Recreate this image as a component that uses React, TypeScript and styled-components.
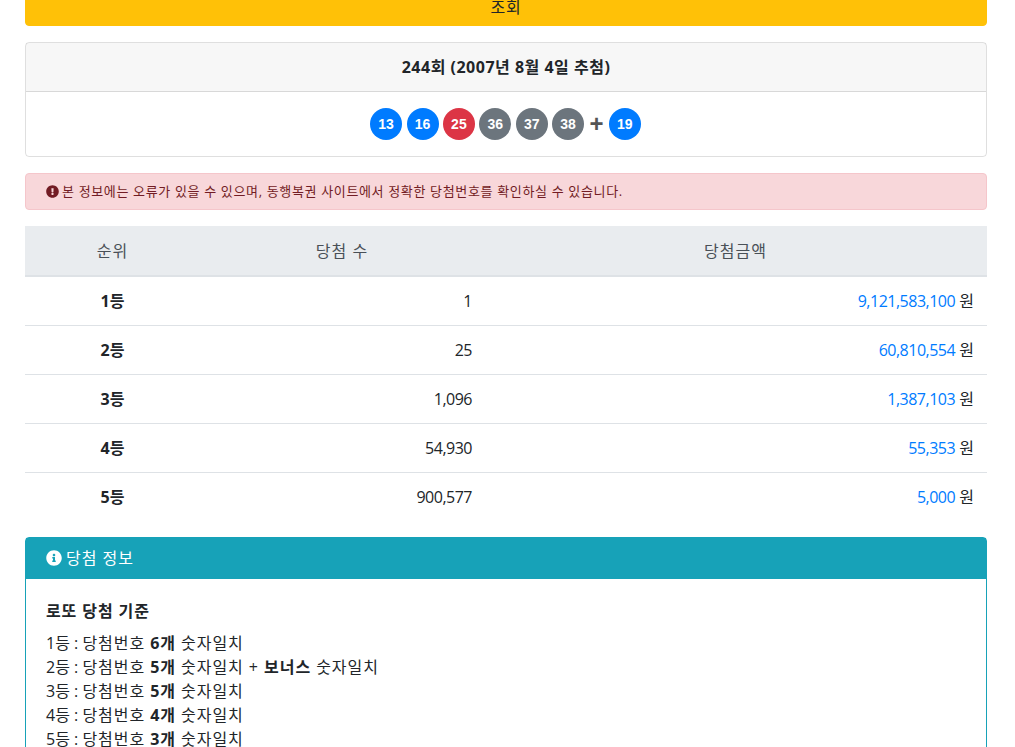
import React from "react";
import styled, { createGlobalStyle } from "styled-components";
import { FaExclamationCircle, FaInfoCircle } from "react-icons/fa";

const Global = createGlobalStyle`
  * { box-sizing: border-box; }
  html, body { margin: 0; padding: 0; background: #fff; height: 747px; overflow: hidden; }
  body {
    font-family: "Open Sans", "Noto Sans CJK KR", sans-serif;
    font-size: 16px;
    line-height: 24px;
    color: #212529;
  }
`;

const Page = styled.main`
  display: flex;
  flex-direction: column;
  gap: 16px;
  width: 962px;
  margin: -12px 0 0 25px;
`;

const SearchButton = styled.button`
  display: block;
  width: 100%;
  height: 38px;
  background: #ffc107;
  border: 1px solid #ffc107;
  border-radius: 4px;
  color: #212529;
  font: inherit;
  letter-spacing: 0.8px;
  padding: 6px 12px;
`;

const DrawCard = styled.section`
  border: 1px solid rgba(0, 0, 0, 0.125);
  border-radius: 4px;
  height: 115px;
`;

const DrawHeader = styled.h2`
  margin: 0;
  height: 49px;
  padding: 12px 20px;
  background: rgba(0, 0, 0, 0.03);
  border-bottom: 1px solid rgba(0, 0, 0, 0.125);
  font-size: 16px;
  font-weight: 700;
  line-height: 24px;
  letter-spacing: 0.5px;
  text-align: center;
`;

const BallRow = styled.div`
  display: flex;
  justify-content: center;
  align-items: center;
  gap: 4.4px;
  padding: 16px 1px 0 0;
`;

const Ball = styled.span<{ $tone: string }>`
  display: flex;
  align-items: center;
  justify-content: center;
  width: 32px;
  height: 32px;
  border-radius: 50%;
  background: ${(p) => p.$tone};
  color: #fff;
  font-family: "Liberation Sans", Arial, sans-serif;
  font-size: 14px;
  font-weight: 700;
`;

const Plus = styled.span`
  width: 16px;
  text-align: center;
  color: #555;
  font-family: "Liberation Sans", Arial, sans-serif;
  font-size: 24px;
  font-weight: 700;
`;

const Alert = styled.div`
  display: flex;
  align-items: center;
  gap: 3px;
  height: 37px;
  padding: 0 20px 1px;
  background: #f8d7da;
  border: 1px solid #f5c6cb;
  border-radius: 4px;
  color: #721c24;
  font-size: 13px;
  letter-spacing: 0.65px;
  svg { width: 13px; height: 13px; flex: none; }
`;

const Table = styled.table`
  width: 962px;
  border-collapse: collapse;
  table-layout: fixed;
`;

const HeadCell = styled.th`
  height: 50px;
  padding: 12px;
  background: #e9ecef;
  border-bottom: 2px solid #dee2e6;
  color: #495057;
  font-weight: 400;
  letter-spacing: 1px;
  text-align: center;
`;

const Row = styled.tr`
  height: 49px;
  border-bottom: 1px solid #dee2e6;
  &:last-child { border-bottom: 0; height: 48px; }
`;

const Rank = styled.td`
  padding: 12px;
  font-weight: 700;
  text-align: center;
`;

const Amount = styled.td`
  padding: 12px 13px 12px 12px;
  text-align: right;
`;

const Count = styled(Amount)`
  padding-right: 12px;
  letter-spacing: -0.5px;
`;

const Prize = styled.span`
  color: #007bff;
  letter-spacing: -0.5px;
`;

const InfoCard = styled.section`
  border: 1px solid #17a2b8;
  border-radius: 4px;
  height: 300px;
`;

const InfoHeader = styled.h3`
  display: flex;
  align-items: center;
  gap: 4px;
  margin: 0;
  height: 41px;
  padding: 0 20px 2px;
  background: #17a2b8;
  color: #fff;
  font-size: 16px;
  font-weight: 400;
  letter-spacing: 1px;
  svg { width: 16px; height: 16px; flex: none; }
`;

const InfoBody = styled.div`
  padding: 20px;
`;

const InfoTitle = styled.h4`
  margin: 0 0 8px;
  font-size: 16px;
  font-weight: 700;
  line-height: 24px;
  letter-spacing: 0.9px;
`;

const Line = styled.div`
  line-height: 24px;
  letter-spacing: 0.95px;
`;

const Prefix = styled.span`
  letter-spacing: 0;
`;

const blue = "#007bff";
const red = "#dc3545";
const gray = "#6c757d";

const balls: [number, string][] = [
  [13, blue],
  [16, blue],
  [25, red],
  [36, gray],
  [37, gray],
  [38, gray],
];

const rows = [
  ["1등", "1", "9,121,583,100"],
  ["2등", "25", "60,810,554"],
  ["3등", "1,096", "1,387,103"],
  ["4등", "54,930", "55,353"],
  ["5등", "900,577", "5,000"],
];

export default function App() {
  return (
    <>
      <Global />
      <Page>
        <SearchButton>조회</SearchButton>
        <DrawCard>
          <DrawHeader>244회 (2007년 8월 4일 추첨)</DrawHeader>
          <BallRow>
            {balls.map(([n, c]) => (
              <Ball key={n} $tone={c}>{n}</Ball>
            ))}
            <Plus>+</Plus>
            <Ball $tone={blue}>19</Ball>
          </BallRow>
        </DrawCard>
        <Alert>
          <FaExclamationCircle />
          본 정보에는 오류가 있을 수 있으며, 동행복권 사이트에서 정확한 당첨번호를 확인하실 수 있습니다.
        </Alert>
        <Table>
          <colgroup>
            <col width={175} />
            <col width={284} />
            <col width={503} />
          </colgroup>
          <thead>
            <tr>
              <HeadCell>순위</HeadCell>
              <HeadCell>당첨 수</HeadCell>
              <HeadCell>당첨금액</HeadCell>
            </tr>
          </thead>
          <tbody>
            {rows.map(([rank, count, prize]) => (
              <Row key={rank}>
                <Rank>{rank}</Rank>
                <Count>{count}</Count>
                <Amount>
                  <Prize>{prize}</Prize> 원
                </Amount>
              </Row>
            ))}
          </tbody>
        </Table>
        <InfoCard>
          <InfoHeader>
            <FaInfoCircle />
            당첨 정보
          </InfoHeader>
          <InfoBody>
            <InfoTitle>로또 당첨 기준</InfoTitle>
            <Line><Prefix>1등 : </Prefix>당첨번호 <b>6개</b> 숫자일치</Line>
            <Line><Prefix>2등 : </Prefix>당첨번호 <b>5개</b> 숫자일치 + <b>보너스</b> 숫자일치</Line>
            <Line><Prefix>3등 : </Prefix>당첨번호 <b>5개</b> 숫자일치</Line>
            <Line><Prefix>4등 : </Prefix>당첨번호 <b>4개</b> 숫자일치</Line>
            <Line><Prefix>5등 : </Prefix>당첨번호 <b>3개</b> 숫자일치</Line>
          </InfoBody>
        </InfoCard>
      </Page>
    </>
  );
}
